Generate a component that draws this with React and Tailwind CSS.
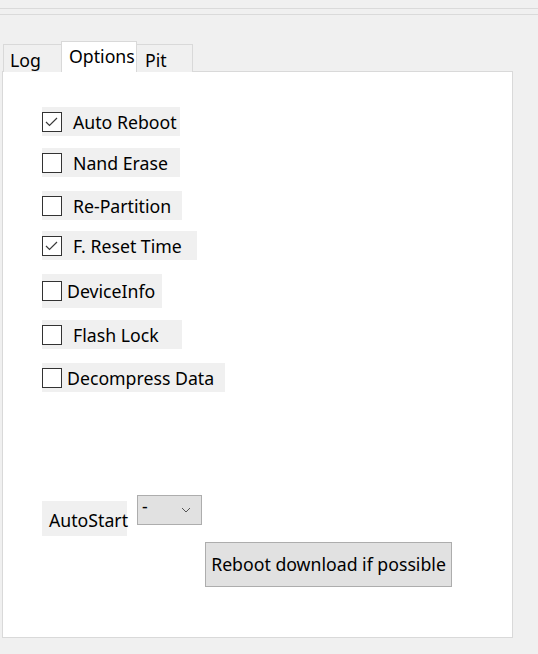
import React from "react";

const font = { fontFamily: '"Noto Sans", "Open Sans", sans-serif' };

function Box({ checked }) {
  return (
    <span className="w-[20px] h-[20px] shrink-0 border border-[#333] bg-white flex items-center justify-center">
      {checked && (
        <svg width="18" height="18" viewBox="0 0 18 18">
          <polyline
            points="3,9 6.5,12.5 14,5"
            fill="none"
            stroke="#3a3a3a"
            strokeWidth="1.2"
          />
        </svg>
      )}
    </span>
  );
}

function Option({ label, checked, w, h = "h-[29px]", gap = "gap-[11px]", className = "" }) {
  return (
    <div className={`flex items-center bg-[#f0f0f0] ${w} ${h} ${gap} ${className}`}>
      <Box checked={checked} />
      <span className="text-[17.7px] leading-none text-black pt-[2px]">{label}</span>
    </div>
  );
}

export default function App() {
  return (
    <div
      style={font}
      className="w-[538px] h-[654px] bg-[#f0f0f0] overflow-hidden text-black"
    >
      <div className="mt-[8px] h-[7px] border-y border-[#dadada]" />

      <div className="mt-[27px] flex items-end h-[30px] pl-[3px]">
        <div className="w-[59px] h-[28px] border border-b-0 border-[#d9d9d9] bg-[#f0f0f0] pl-[6px] text-[17.7px] leading-[30px]">
          Log
        </div>
        <div className="relative z-10 -ml-px w-[76px] h-[31px] border border-b-0 border-[#d9d9d9] bg-white pl-[7px] text-[17.7px] leading-[28px]">
          Options
        </div>
        <div className="w-[56px] h-[28px] border border-l-0 border-b-0 border-[#d9d9d9] bg-[#f0f0f0] pl-[8px] text-[17.7px] leading-[30px]">
          Pit
        </div>
      </div>

      <div className="-mt-px ml-[2px] w-[511px] h-[567px] border border-[#d9d9d9] bg-white pl-[39px] pt-[35px]">
        <Option label="Auto Reboot" checked w="w-[138px]" />
        <Option label="Nand Erase" w="w-[138px]" className="mt-[12px]" />
        <Option label="Re-Partition" w="w-[140px]" className="mt-[14px]" />
        <Option label="F. Reset Time" checked w="w-[155px]" className="mt-[11px]" />
        <Option label="DeviceInfo" w="w-[120px]" h="h-[34px]" gap="gap-[5px]" className="mt-[14px]" />
        <Option label="Flash Lock" w="w-[140px]" className="mt-[12px]" />
        <Option label="Decompress Data" w="w-[183px]" gap="gap-[5px]" className="mt-[14px]" />

        <div className="mt-[103px] flex items-start gap-[10px]">
          <div className="mt-[6px] w-[85px] h-[35px] bg-[#f0f0f0] pl-[7px] text-[17.7px] leading-[38px]">
            AutoStart
          </div>
          <div className="w-[65px] h-[30px] border border-[#adadad] bg-[#e1e1e1] flex items-start justify-between pl-[4px] pr-[10px]">
            <span className="text-[17.7px] leading-[20px]">-</span>
            <svg width="10" height="6" viewBox="0 0 10 6" className="mt-[11px]">
              <polyline points="1,1 5,5 9,1" fill="none" stroke="#555" strokeWidth="1" />
            </svg>
          </div>
        </div>

        <button className="mt-[6px] ml-[163px] w-[247px] h-[45px] border border-[#adadad] bg-[#e1e1e1] text-[17.7px] text-black">
          Reboot download if possible
        </button>
      </div>

      <div className="mt-[14px] pl-[5px] flex gap-[130px] text-[17px] leading-[20px] whitespace-nowrap">
        <span className="text-black">I</span>
        <span className="text-[#1a6fc4]">Id ldl ld ll ldd</span>
        <span className="text-[#1a6fc4]">ll ld</span>
      </div>
    </div>
  );
}
